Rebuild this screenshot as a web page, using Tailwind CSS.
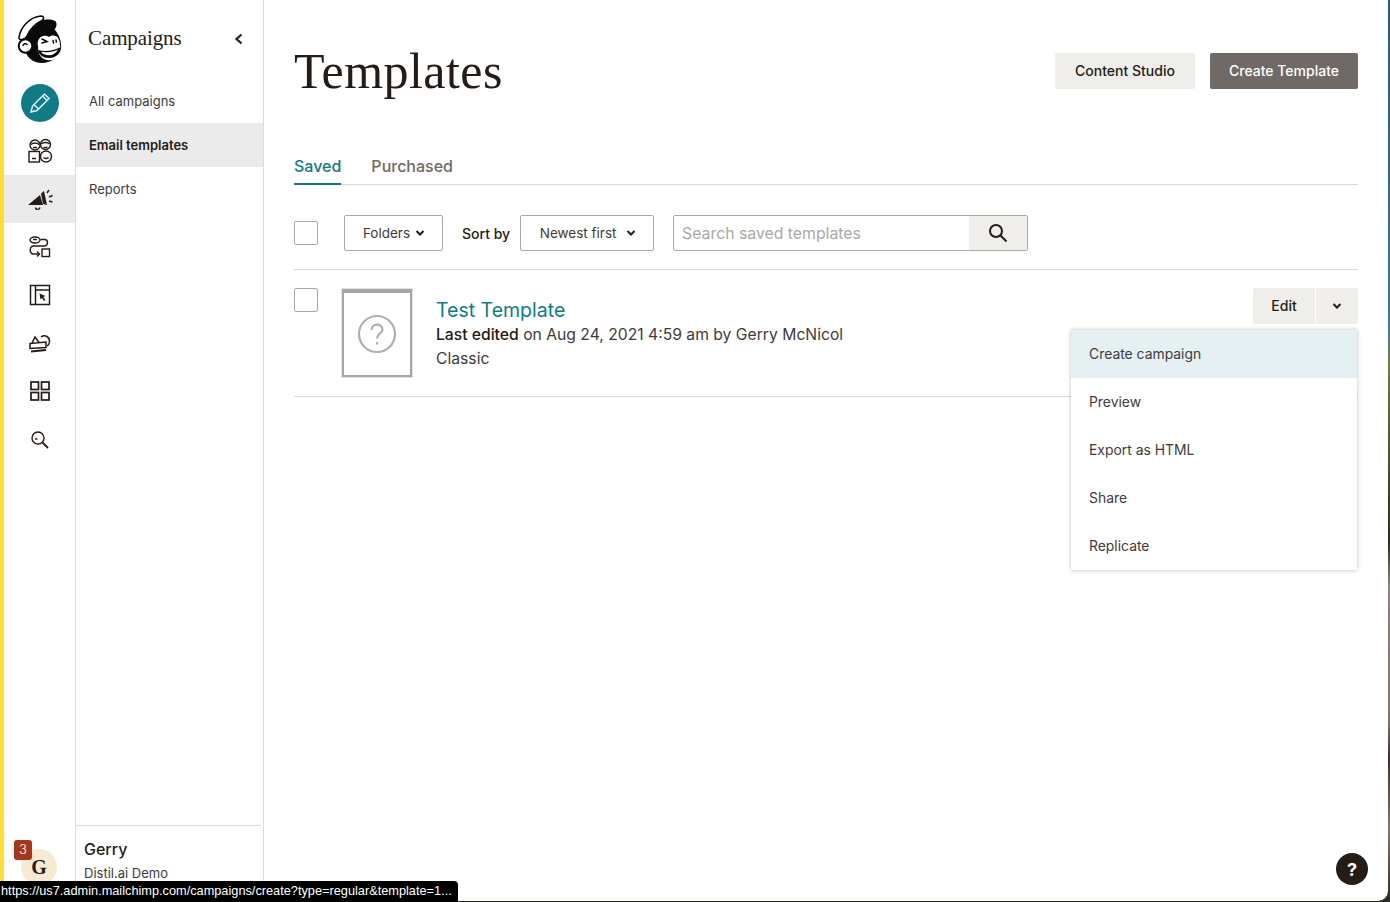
<!DOCTYPE html>
<html lang="en">
<head>
  <meta charset="UTF-8">
  <title>Templates | Mailchimp</title>
  <script src="https://cdn.jsdelivr.net/npm/@tailwindcss/browser@4"></script>
</head>
<body class="bg-[#2b2a24] font-['Inter','Liberation_Sans',sans-serif] text-[#241c15]">
  <div class="relative w-[1390px] h-[902px] overflow-hidden flex">
    <!-- wallpaper strip -->
    <div class="absolute right-0 top-0 w-[2px] h-full bg-[linear-gradient(to_bottom,#1f5a93_0%,#3d76a3_36%,#6f7f3a_40%,#27301c_60%,#8c8480_65%,#7d7470_80%,#3a3230_84%,#8a7468_92%,#2b2a24_100%)]"></div>

    <div class="relative flex w-[1388px] h-[901px] bg-white rounded-br-[10px] overflow-hidden">
      <div class="w-1 shrink-0 bg-[#ffdd33]"></div>

      <!-- icon rail -->
      <nav class="w-[72px] shrink-0 border-r border-[#dcdcdc] flex flex-col items-center relative">
        <svg class="mt-[15px]" width="46" height="49" viewBox="0 0 46 49">
          <!-- head -->
          <path d="M12 16C17 9 29 8 36 13c6 5 9 14 8 22-2 8-11 13-19 13-9 0-16-6-17-14-.5-7 0-13 4-18z" fill="#0b0a09"/>
          <!-- cap -->
          <path d="M15 11C21 5 31 3 38 6c2 1 2 5 0 8l-3 3c-6-4-15-5-22-1z" fill="#0b0a09"/>
          <!-- brim -->
          <path d="M2 23C3 12 13 2 24 1c3 0 3.500 3 1 4.500C19 8.500 13 14 10 21c-1.500 3.500-8 5-8 2z" fill="#fff" stroke="#0b0a09" stroke-width="1.600"/>
          <!-- ear -->
          <circle cx="8.500" cy="31" r="6.800" fill="#fff" stroke="#0b0a09" stroke-width="2"/>
          <path d="M6 31c0-2.500 3.500-3 4.500-1" fill="none" stroke="#0b0a09" stroke-width="1.400"/>
          <!-- face -->
          <path d="M21 31c-1-3 0-7 3-9 3-2 6-1 8 0 3-2 7-2 9 1 2 3 2 6 2 8 2 3 2 7 0 9-3 4-8 6-13 5-6-1-9-6-9-14z" fill="#fff"/>
          <!-- eyes -->
          <path d="M25 24l5 2.500-5 1.500M36 25.500l.6 2.500M39 25l.4 2" fill="none" stroke="#0b0a09" stroke-width="1.500" stroke-linecap="round"/>
          <!-- mouth -->
          <path d="M21 35c7 2 15 1 23-3 .5 6-5 11-12 11-6 0-10-3-11-8z" fill="#0b0a09"/>
          <path d="M24 36.800c6 1 12 .3 17-2-2 3.500-5 5.500-9 5.500-4 0-6.500-1.500-8-3.500z" fill="#fff"/>
        </svg>

        <div class="mt-[20px] w-[38px] h-[38px] rounded-full bg-[#0e7c86] flex items-center justify-center">
          <svg width="22" height="22" viewBox="0 0 22 22" fill="none" stroke="#e6f2f3" stroke-width="1.400">
            <path d="M2 20l1.500-6L15.500 2l4.500 4.500L8 18.500z"/><path d="M13.500 4l4.500 4.500M5 12.500l4.500 4.500"/>
          </svg>
        </div>

        <div class="mt-[5px] h-[48px] w-full flex items-center justify-center">
          <svg width="26" height="26" viewBox="0 0 26 26" fill="none" stroke="#241c15" stroke-width="1.400">
            <circle cx="8" cy="7" r="5"/><circle cx="18.500" cy="6.500" r="5"/>
            <path d="M4 6.500c2-2 6-2 8 0M14.500 6c2-2 6-2 8 0"/>
            <path d="M6 9.500h4M16.500 9.500h4"/>
            <rect x="2" y="13.500" width="10.500" height="10.500"/><circle cx="19" cy="18.500" r="5.500"/>
            <path d="M5 20.500h4M16.500 19.500c1.500 1.300 3.500 1.300 5 0"/>
          </svg>
        </div>

        <div class="h-[48px] w-full bg-[#ebebeb] flex items-center justify-center">
          <svg width="26" height="26" viewBox="0 0 26 26">
            <path d="M1 19L13 9l3 10z" fill="#241c15"/>
            <path d="M14 7.500l3-2.500 3 14-4-1z" fill="#241c15"/>
            <path d="M8.500 21.500c0 2.500 4 2.500 4.500 0" fill="none" stroke="#241c15" stroke-width="1.400"/>
            <path d="M20 7l2-3M22 11l3.500-1.500M22 15l3.500 1" stroke="#241c15" stroke-width="1.400" fill="none"/>
          </svg>
        </div>

        <div class="h-[48px] w-full flex items-center justify-center">
          <svg width="24" height="24" viewBox="0 0 24 24" fill="none" stroke="#241c15" stroke-width="1.400">
            <ellipse cx="7" cy="5" rx="5" ry="3"/><path d="M5 4.500h4"/>
            <path d="M12.500 4.500h4c4 0 4 6 0 6.500H6c-5 0-5 8-.5 8H11"/><path d="M9 16.500l2.500 2.500L9 21.500"/>
            <rect x="14" y="14" width="7.500" height="7.500"/>
          </svg>
        </div>

        <div class="h-[48px] w-full flex items-center justify-center">
          <svg width="22" height="22" viewBox="0 0 22 22" fill="none" stroke="#241c15" stroke-width="1.500">
            <rect x="1.500" y="1.500" width="19" height="19"/><path d="M6.500 1.500v19M6.500 6h14"/>
            <path d="M10.500 9.500l6 2.500-2.300 1 2.300 3-1.500 1-2-3-1.500 1.500z" fill="#241c15" stroke="none"/>
          </svg>
        </div>

        <div class="h-[48px] w-full flex items-center justify-center">
          <svg width="24" height="24" viewBox="0 0 24 24" fill="none" stroke="#241c15" stroke-width="1.500">
            <path d="M2 12.500l16-1.500v5.500L2 17.500zM4 12l3-6 4 5.500"/>
            <path d="M13 6c4-3 9 0 8.500 5-.2 2-1 3-2.500 4"/>
            <path d="M3 20.500l15-1.500" stroke-width="1.800"/>
          </svg>
        </div>

        <div class="h-[48px] w-full flex items-center justify-center">
          <svg width="20" height="20" viewBox="0 0 20 20" fill="none" stroke="#241c15" stroke-width="1.700">
            <rect x="1" y="1" width="7.500" height="7.500"/><rect x="11.500" y="1" width="7.500" height="7.500"/>
            <rect x="1" y="11.500" width="7.500" height="7.500"/><rect x="11.500" y="11.500" width="7.500" height="7.500"/>
          </svg>
        </div>

        <div class="h-[48px] w-full flex items-center justify-center pt-[2px]">
          <svg width="20" height="20" viewBox="0 0 20 20" fill="none" stroke="#241c15" stroke-width="1.400">
            <circle cx="8" cy="8" r="6"/><path d="M12.500 12.500L18 18" stroke-width="1.800"/><path d="M5 9h2.500"/>
          </svg>
        </div>

        <!-- avatar -->
        <div class="absolute left-[17px] top-[849px] w-[36px] h-[36px] rounded-full bg-[#f6ead0] flex items-center justify-center font-['Liberation_Serif',serif] font-bold text-[20px]">G</div>
        <div class="absolute left-[10px] top-[840px] w-[18px] h-[20px] rounded-[3px] bg-[#a8341a] text-white text-[13px] font-light flex items-center justify-center">3</div>
      </nav>

      <!-- section nav -->
      <aside class="w-[188px] shrink-0 border-r border-[#dcdcdc] flex flex-col">
        <div class="h-[77px] mb-[2px] pl-[12px] pr-[18px] flex items-center justify-between">
          <span class="font-['Liberation_Serif',serif] text-[21px] tracking-[-0.1px] leading-none">Campaigns</span>
          <svg width="12" height="12" viewBox="0 0 12 12" fill="none" stroke="#241c15" stroke-width="2.200"><path d="M8.500 1.500L3.500 6l5 4.500"/></svg>
        </div>
        <a class="h-[44px] pl-[13px] pt-[2px] flex items-center text-[13px] text-[#403b3b]">All campaigns</a>
        <a class="h-[44px] pl-[13px] pt-[2px] flex items-center text-[13px] font-semibold bg-[#ebebeb]">Email templates</a>
        <a class="h-[44px] pl-[13px] pt-[2px] flex items-center text-[13px] text-[#403b3b]">Reports</a>
        <div class="mt-auto mr-[2px] h-[76px] border-t border-[#dcdcdc] pl-[8px] pt-[13px]">
          <div class="text-[16px] leading-[20px] font-medium">Gerry</div>
          <div class="mt-[5px] text-[13px] leading-[18px] text-[#403b3b]">Distil.ai Demo</div>
        </div>
      </aside>

      <!-- main -->
      <main class="relative flex-1 pl-[30px] pr-[30px]">
        <div class="flex items-start justify-between">
          <h1 class="mt-[42px] font-['Liberation_Serif',serif] text-[50px] leading-[58px] tracking-[0.45px]">Templates</h1>
          <div class="mt-[53px] flex gap-[15px]">
            <button class="h-[36px] w-[140px] pb-[2px] rounded-[2px] bg-[#efeeea] text-[14px] font-medium">Content Studio</button>
            <button class="h-[36px] w-[148px] pb-[2px] rounded-[2px] bg-[#6f6a65] text-white text-[14px] font-medium">Create Template</button>
          </div>
        </div>

        <div class="mt-[52px] flex gap-[30px] border-b border-[#d9d9d9] h-[33px] text-[16px]">
          <span class="h-[33px] leading-[28px] font-medium text-[#0e7c86] border-b-2 border-[#0e7c86]">Saved</span>
          <span class="leading-[28px] font-medium text-[#6f6a65]">Purchased</span>
        </div>

        <div class="mt-[30px] h-[36px] flex items-center text-[13.5px]">
          <div class="w-[24px] h-[24px] rounded-[2px] border border-[#aaa9a6]"></div>
          <button class="ml-[26px] h-[36px] w-[99px] pl-[1px] rounded-[2px] border border-[#aaa9a6] flex items-center justify-center gap-[5px] text-[#403b3b]">
            Folders
            <svg width="10" height="8" viewBox="0 0 10 8" fill="none" stroke="#241c15" stroke-width="2"><path d="M1.500 2l3.500 3.500L8.500 2"/></svg>
          </button>
          <span class="ml-[19px] text-[14px] font-medium">Sort by</span>
          <button class="ml-[10px] h-[36px] w-[134px] pl-[2px] rounded-[2px] border border-[#aaa9a6] flex items-center justify-center gap-[10px] text-[#403b3b]">
            Newest first
            <svg width="10" height="8" viewBox="0 0 10 8" fill="none" stroke="#241c15" stroke-width="2"><path d="M1.500 2l3.500 3.500L8.500 2"/></svg>
          </button>
          <div class="ml-[19px] h-[36px] w-[355px] rounded-[2px] border border-[#aaa9a6] flex">
            <span class="flex-1 pl-[8px] leading-[36px] text-[15.8px] text-[#aaa9a6]">Search saved templates</span>
            <div class="w-[58px] bg-[#efeeea] flex items-center justify-center">
              <svg width="20" height="20" viewBox="0 0 20 20" fill="none" stroke="#241c15" stroke-width="2"><circle cx="8" cy="8" r="6"/><path d="M12.500 12.500L18.500 18.500"/></svg>
            </div>
          </div>
        </div>

        <div class="mt-[18px] h-[128px] border-y border-[#d9d9d9] flex items-start pt-[18px]">
          <div class="w-[24px] h-[24px] rounded-[2px] border border-[#aaa9a6]"></div>
          <div class="ml-[24px] mt-[1px] w-[70px] h-[88px] ring-1 ring-[#e2e2e2] border-2 border-t-4 border-[#a6a6a6] flex items-center justify-center">
            <svg width="40" height="40" viewBox="0 0 40 40" fill="none" stroke="#b0b0b0" stroke-width="2.200"><circle cx="20" cy="20" r="18"/><path d="M14.500 16c0-7 11-7 11-.5 0 4.500-5.500 4-5.500 9"/><path d="M20 28v2.500"/></svg>
          </div>
          <div class="ml-[24px] mt-[10px]">
            <div class="text-[19.5px] leading-[25px] text-[#0e7c86]">Test Template</div>
            <div class="text-[15.7px] leading-[24px] text-[#403b3b]"><span class="font-medium text-[#241c15]">Last edited</span> on Aug 24, 2021 4:59 am by Gerry McNicol</div>
            <div class="text-[15.7px] leading-[24px] text-[#403b3b]">Classic</div>
          </div>
          <div class="ml-auto flex gap-px">
            <button class="h-[36px] w-[62px] pb-[2px] rounded-l-[2px] bg-[#efeeea] text-[14px] font-medium">Edit</button>
            <button class="h-[36px] w-[42px] rounded-r-[2px] bg-[#efeeea] flex items-center justify-center">
              <svg width="10" height="8" viewBox="0 0 10 8" fill="none" stroke="#241c15" stroke-width="2"><path d="M1.500 2l3.500 3.500L8.500 2"/></svg>
            </button>
          </div>
        </div>

        <!-- row action menu -->
        <ul class="absolute left-[807px] top-[330px] w-[286px] bg-white rounded-[1px] shadow-[0_0_4px_rgba(36,28,21,0.3)] text-[13.9px] text-[#403b3b]">
          <li class="h-[48px] pl-[18px] flex items-center bg-[#e5f0f3]">Create campaign</li>
          <li class="h-[48px] pl-[18px] flex items-center">Preview</li>
          <li class="h-[48px] pl-[18px] flex items-center">Export as HTML</li>
          <li class="h-[48px] pl-[18px] flex items-center">Share</li>
          <li class="h-[48px] pl-[18px] flex items-center">Replicate</li>
        </ul>

        <div class="absolute left-[1072px] top-[853px] w-[32px] h-[32px] rounded-full bg-[#241c15] text-white text-[18px] font-bold flex items-center justify-center">?</div>
      </main>
    </div>

    <!-- browser status bubble -->
    <div class="absolute left-0 top-[881px] h-[21px] w-[458px] bg-black rounded-tr-[4px] text-white text-[12.75px] leading-[20px] pl-[1px] font-['Liberation_Sans',sans-serif] whitespace-nowrap">https://us7.admin.mailchimp.com/campaigns/create?type=regular&amp;template=1...</div>
  </div>
</body>
</html>
